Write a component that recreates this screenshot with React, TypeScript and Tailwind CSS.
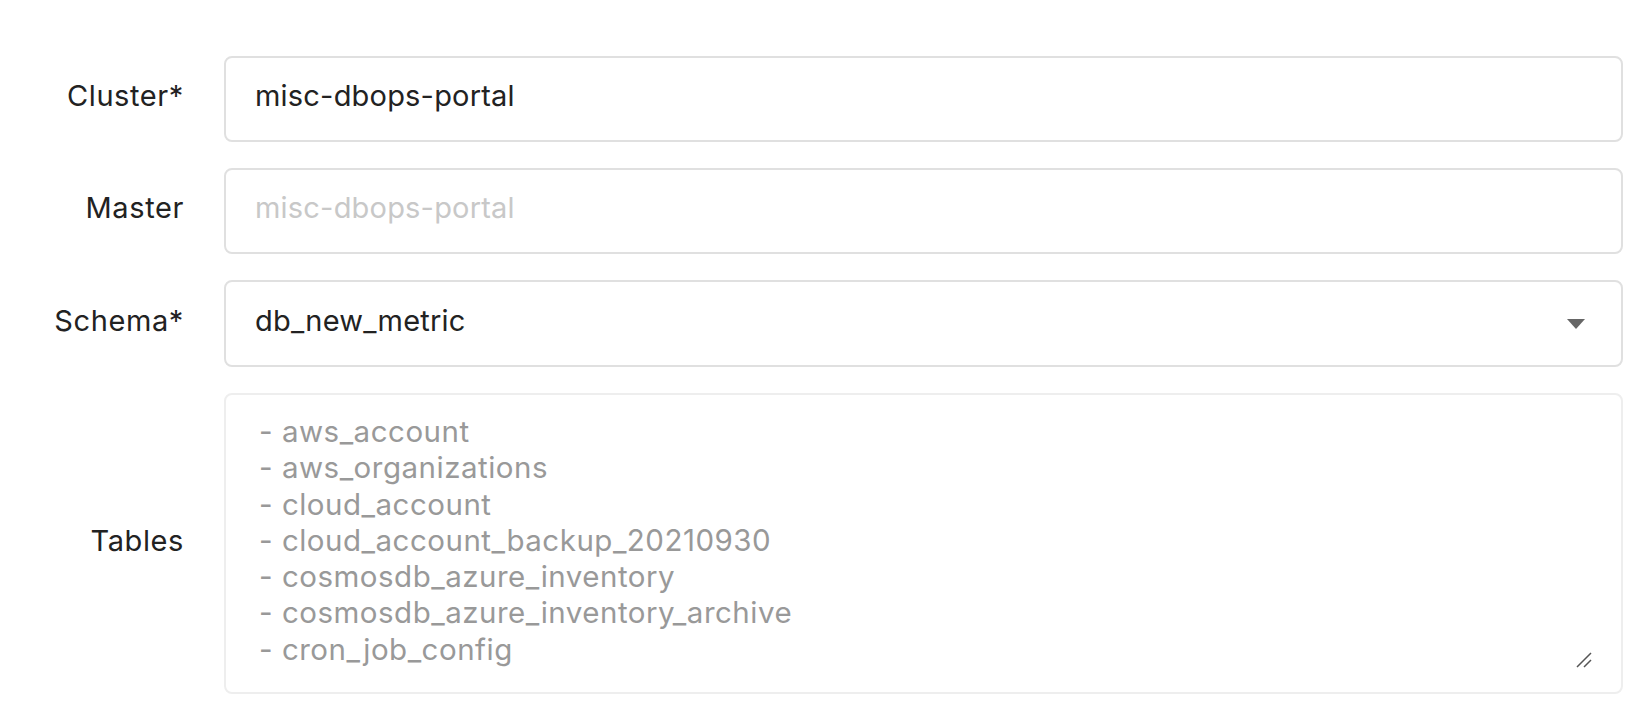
import React from 'react';

const tables = [
  'aws_account',
  'aws_organizations',
  'cloud_account',
  'cloud_account_backup_20210930',
  'cosmosdb_azure_inventory',
  'cosmosdb_azure_inventory_archive',
  'cron_job_config',
];

function Label({ children }: { children: React.ReactNode }) {
  return (
    <div className="flex items-center justify-end pb-[6px] text-[29px] tracking-[0.6px] text-[#222]">{children}</div>
  );
}

export default function App() {
  return (
    <div
      className="min-h-screen bg-white pt-[56px] pr-[21px]"
      style={{ fontFamily: 'Inter, "Open Sans", sans-serif' }}
    >
      <div className="grid grid-cols-[184px_1fr] gap-x-[40px] gap-y-[26px]">
        <Label>Cluster*</Label>
        <div className="h-[86px] rounded-[8px] border-2 border-[#e0e0e0] flex items-center pl-[29px] pb-[6px] text-[29px] tracking-[0.2px] text-[#222]">
          misc-dbops-portal
        </div>

        <Label>Master</Label>
        <div className="h-[86px] rounded-[8px] border-2 border-[#e0e0e0] flex items-center pl-[29px] pb-[6px] text-[29px] tracking-[0.2px] text-[#c8c8c8]">
          misc-dbops-portal
        </div>

        <Label>Schema*</Label>
        <div className="h-[87px] rounded-[8px] border-2 border-[#e0e0e0] flex items-center justify-between pl-[29px] pr-[36px] pb-[6px] text-[29px] tracking-[0.2px] text-[#222]">
          <span>db_new_metric</span>
          <svg className="mt-[6px]" width="18" height="10" viewBox="0 0 18 10">
            <path d="M0 0 L18 0 L9 10 Z" fill="#666" />
          </svg>
        </div>

        <Label>Tables</Label>
        <div className="relative h-[301px] rounded-[8px] border-2 border-[#eeeeee] pt-[18px] pl-[33px] text-[29.5px] leading-[36.3px] tracking-[0.5px] text-[#999]">
          {tables.map((t) => (
            <div key={t}>- {t}</div>
          ))}
          <svg className="absolute right-[29px] bottom-[24px]" width="16" height="16" viewBox="0 0 16 16">
            <path d="M1 15 L15 1 M8 15 L15 8" stroke="#555" strokeWidth="1.5" />
          </svg>
        </div>
      </div>
    </div>
  );
}
